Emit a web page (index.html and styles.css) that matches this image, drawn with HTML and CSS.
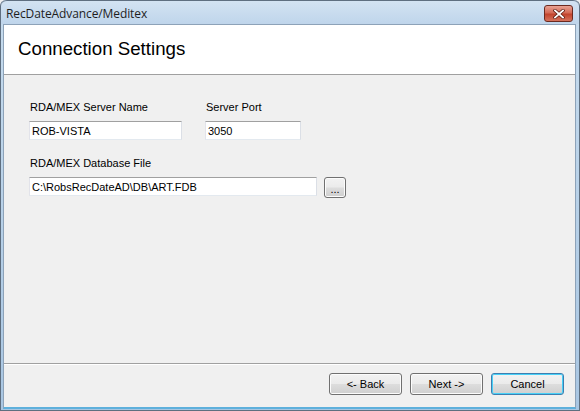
FILE: index.html
```html
<!DOCTYPE html>
<html>
<head>
<meta charset="utf-8">
<link rel="stylesheet" href="styles.css">
</head>
<body>
<div class="window">
  <div class="titlebar">
    <span class="title">RecDateAdvance/Meditex</span>
    <button class="close" aria-label="Close">
      <svg width="12" height="10" viewBox="0 0 12 10">
        <path d="M2 1.5 L10 8.5 M10 1.5 L2 8.5" stroke="#5a1a10" stroke-width="3.2" stroke-linecap="square"/>
        <path d="M2 1.5 L10 8.5 M10 1.5 L2 8.5" stroke="#ffffff" stroke-width="1.8" stroke-linecap="square"/>
      </svg>
    </button>
  </div>
  <div class="client">
    <div class="header">
      <h1 class="heading">Connection Settings</h1>
    </div>
    <div class="body">
      <div class="row">
        <div class="field">
          <label class="label">RDA/MEX Server Name</label>
          <div class="input w-name">ROB-VISTA</div>
        </div>
        <div class="field">
          <label class="label">Server Port</label>
          <div class="input w-port">3050</div>
        </div>
      </div>
      <div class="row row-file">
        <div class="field">
          <label class="label">RDA/MEX Database File</label>
          <div class="file-line">
            <div class="input w-file">C:\RobsRecDateAD\DB\ART.FDB</div>
            <button class="btn browse">...</button>
          </div>
        </div>
      </div>
    </div>
    <div class="footer">
      <button class="btn nav">&lt;- Back</button>
      <button class="btn nav">Next -&gt;</button>
      <button class="btn nav default">Cancel</button>
    </div>
  </div>
</div>
</body>
</html>
```

FILE: styles.css
```css
html, body {
  margin: 0;
  padding: 0;
  width: 580px;
  height: 411px;
  overflow: hidden;
  background: #f0f0f0;
}

.window {
  width: 580px;
  height: 411px;
  box-sizing: border-box;
  display: flex;
  flex-direction: column;
  background: linear-gradient(#c7dcee, #a9c6e2);
  border: 1px solid #5f6f80;
  border-top: none;
  border-radius: 6px 6px 0 0;
  padding: 0 3px 1px 2px;
  font-family: "Liberation Sans", Arial, sans-serif;
}

.titlebar {
  height: 24px;
  flex: none;
  display: flex;
  align-items: center;
  justify-content: space-between;
  background: linear-gradient(#d3e3f2, #bfd5eb);
  margin: 0 -3px 0 -2px;
  padding: 0 6px 0 5px;
  border-top: 1px solid #5f6f80;
  border-radius: 6px 6px 0 0;
  box-sizing: border-box;
}

.title {
  font-family: "Open Sans", "Liberation Sans", sans-serif;
  font-size: 12px;
  color: #1e1e1e;
  letter-spacing: -0.1px;
  padding-top: 1px;
}

.close {
  width: 29px;
  height: 17px;
  margin-top: 2px;
  border: 1px solid #6b2a20;
  border-radius: 3px;
  background: linear-gradient(#e8a293 0%, #d46a56 45%, #c2442d 55%, #d5725c 100%);
  display: flex;
  align-items: center;
  justify-content: center;
  padding: 0;
}

.client {
  flex: 1;
  display: flex;
  flex-direction: column;
  background: #f0f0f0;
  border: 1px solid #8da2b8;
  border-bottom: 2px solid #5eb0dc;
}

.header {
  height: 49px;
  flex: none;
  background: #ffffff;
  border-bottom: 1px solid #a0a0a0;
  display: flex;
  align-items: center;
  padding-left: 14px;
}

.heading {
  margin: 0;
  font-weight: normal;
  font-size: 18.7px;
  color: #000;
  padding-bottom: 1px;
}

.body {
  flex: 1;
  padding: 26px 0 0 25px;
  font-size: 11px;
  color: #000;
}

.row {
  display: flex;
  gap: 23px;
}

.row-file {
  margin-top: 17px;
}

.field {
  display: flex;
  flex-direction: column;
}

.label {
  height: 13px;
  line-height: 13px;
  margin-left: 1px;
  margin-bottom: 7px;
}

.input {
  height: 19px;
  box-sizing: border-box;
  background: #fff;
  border: 1px solid #abadb3;
  border-top-color: #a0a0a0;
  border-left-color: #e2e3ea;
  border-right-color: #dbdfe6;
  border-bottom-color: #e3e9ef;
  padding: 2px 0 0 2px;
  line-height: 14px;
  white-space: nowrap;
}

.w-name { width: 153px; }
.w-port { width: 96px; }
.w-file { width: 288px; }

.file-line {
  display: flex;
  align-items: flex-start;
  gap: 7px;
}

.btn {
  font-family: "Liberation Sans", Arial, sans-serif;
  font-size: 11px;
  color: #000;
  box-sizing: border-box;
  border: 1px solid #707070;
  border-radius: 3px;
  background: linear-gradient(#f2f2f2 0%, #ebebeb 48%, #dddddd 52%, #cfcfcf 100%);
  box-shadow: inset 0 0 0 1px #fcfcfc;
  padding: 0;
}

.browse {
  width: 22px;
  height: 21px;
  line-height: 14px;
  padding-top: 2px;
}

.footer {
  height: 44px;
  box-sizing: border-box;
  flex: none;
  border-top: 1px solid #a0a0a0;
  box-shadow: inset 0 1px 0 #ffffff;
  display: flex;
  justify-content: flex-end;
  align-items: flex-start;
  gap: 8px;
  padding: 9px 11px 0 0;
}

.nav {
  width: 73px;
  height: 22px;
}

.nav.default {
  border-color: #3c7fb1;
  box-shadow: inset 0 0 0 1px #48d0f7;
}
```
